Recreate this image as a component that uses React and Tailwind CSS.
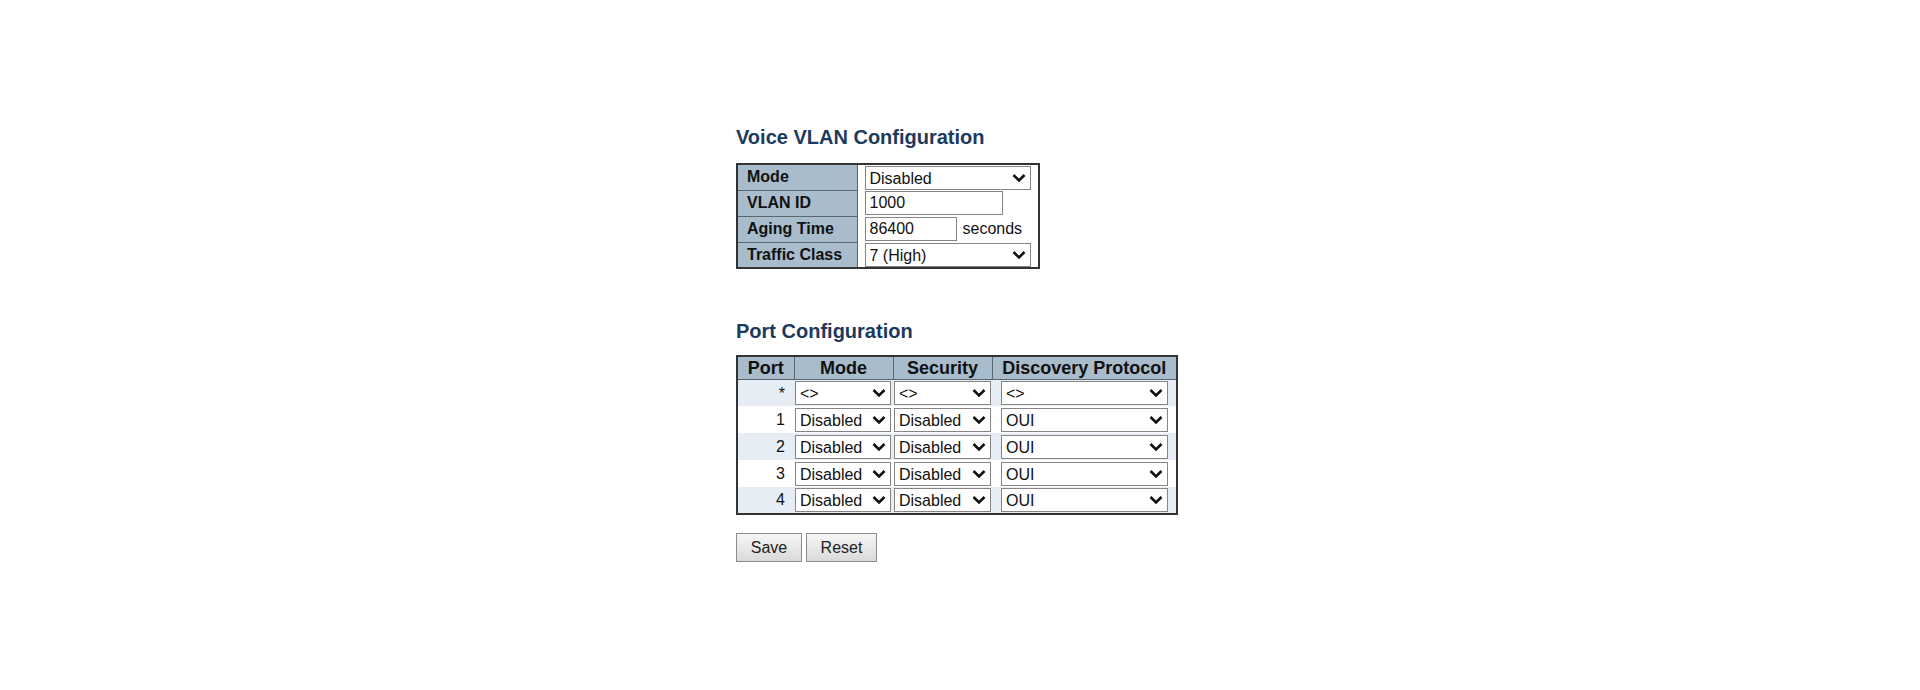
import React from "react";

const Chevron = () => (
  <svg
    className="pointer-events-none absolute right-[4px] top-1/2 -translate-y-1/2"
    width="14"
    height="9"
    viewBox="0 0 14 9"
  >
    <path d="M1.5 1.5 L7 7 L12.5 1.5" fill="none" stroke="#111" strokeWidth="2.6" />
  </svg>
);

// select drawn the way the old switch UI shows it
const Select = ({ value, options, className }) => (
  <div className={"relative h-[24px] bg-white border border-[#858585] " + className}>
    <select
      defaultValue={value}
      className="appearance-none w-full h-full bg-transparent pl-[4px] pr-[20px] text-[16px] leading-[22px] text-[#111] outline-none"
    >
      {options.map((o) => (
        <option key={o}>{o}</option>
      ))}
    </select>
    <Chevron />
  </div>
);

const Input = ({ value, className }) => (
  <input
    defaultValue={value}
    className={
      "h-[24px] bg-white border border-[#858585] pl-[4px] text-[16px] text-[#111] outline-none " + className
    }
  />
);

const vlanRows = [
  { label: "Mode", cell: <Select value="Disabled" options={["Disabled", "Enabled"]} className="w-[166px]" /> },
  { label: "VLAN ID", cell: <Input value="1000" className="w-[138px]" /> },
  {
    label: "Aging Time",
    cell: (
      <div className="flex items-center gap-[6px]">
        <Input value="86400" className="w-[92px]" />
        <span className="text-[16px] text-[#111]">seconds</span>
      </div>
    ),
  },
  {
    label: "Traffic Class",
    cell: (
      <Select
        value="7 (High)"
        options={["0 (Low)", "1", "2", "3", "4", "5", "6", "7 (High)"]}
        className="w-[166px]"
      />
    ),
  },
];

const ports = ["1", "2", "3", "4"];

export default function App() {
  return (
    <div className="w-[1920px] h-[690px] bg-white pl-[736px] pt-[125px] font-['Liberation_Sans',Arial,sans-serif] text-[16px] text-[#111]">
      <h1 className="text-[20px] leading-[24px] font-bold text-[#1c3a5e]">Voice VLAN Configuration</h1>

      <table className="mt-[14px] border-collapse border-2 border-[#333] table-fixed w-[304px]">
        <tbody>
          {vlanRows.map((r) => (
            <tr key={r.label} className="h-[26px]">
              <th className="w-[120px] bg-[#a8bccc] border border-[#5a6570] text-left pl-[9px] font-bold leading-[20px]">
                {r.label}
              </th>
              <td className="pl-[7px] py-0 align-middle">{r.cell}</td>
            </tr>
          ))}
        </tbody>
      </table>

      <h1 className="mt-[50px] text-[20px] leading-[24px] font-bold text-[#1c3a5e]">Port Configuration</h1>

      <table className="mt-[12px] border-collapse border-2 border-[#333] table-fixed w-[442px]">
        <thead>
          <tr className="h-[23px] bg-[#a8bccc]">
            <th className="w-[57px] border border-[#5a6570] font-bold text-[18px] leading-[20px]">Port</th>
            <th className="w-[99px] border border-[#5a6570] font-bold text-[18px] leading-[20px]">Mode</th>
            <th className="w-[99px] border border-[#5a6570] font-bold text-[18px] leading-[20px]">Security</th>
            <th className="border border-[#5a6570] font-bold text-[18px] leading-[20px]">Discovery Protocol</th>
          </tr>
        </thead>
        <tbody>
          <tr className="h-[27px] bg-[#e6edf4]">
            <td className="text-right pr-[9px] align-top pt-[2px]">*</td>
            <td className="pl-[1px]">
              <Select value="<>" options={["<>", "Disabled", "Auto", "Forced"]} className="w-[96px]" />
            </td>
            <td className="pl-[1px]">
              <Select value="<>" options={["<>", "Disabled", "Enabled"]} className="w-[97px]" />
            </td>
            <td className="pl-[9px]">
              <Select value="<>" options={["<>", "OUI", "LLDP", "Both"]} className="w-[167px]" />
            </td>
          </tr>
          {ports.map((p, i) => (
            <tr key={p} className={"h-[27px] " + (i % 2 === 1 ? "bg-[#e6edf4]" : "bg-white")}>
              <td className="text-right pr-[9px]">{p}</td>
              <td className="pl-[1px]">
                <Select value="Disabled" options={["Disabled", "Auto", "Forced"]} className="w-[96px]" />
              </td>
              <td className="pl-[1px]">
                <Select value="Disabled" options={["Disabled", "Enabled"]} className="w-[97px]" />
              </td>
              <td className="pl-[9px]">
                <Select value="OUI" options={["OUI", "LLDP", "Both"]} className="w-[167px]" />
              </td>
            </tr>
          ))}
        </tbody>
      </table>

      <div className="mt-[18px] flex gap-[4px]">
        <button className="w-[66px] h-[29px] border border-[#8c8c8c] bg-gradient-to-b from-[#f6f6f6] to-[#dadada] text-[16px] text-[#222]">
          Save
        </button>
        <button className="w-[71px] h-[29px] border border-[#8c8c8c] bg-gradient-to-b from-[#f6f6f6] to-[#dadada] text-[16px] text-[#222]">
          Reset
        </button>
      </div>
    </div>
  );
}
